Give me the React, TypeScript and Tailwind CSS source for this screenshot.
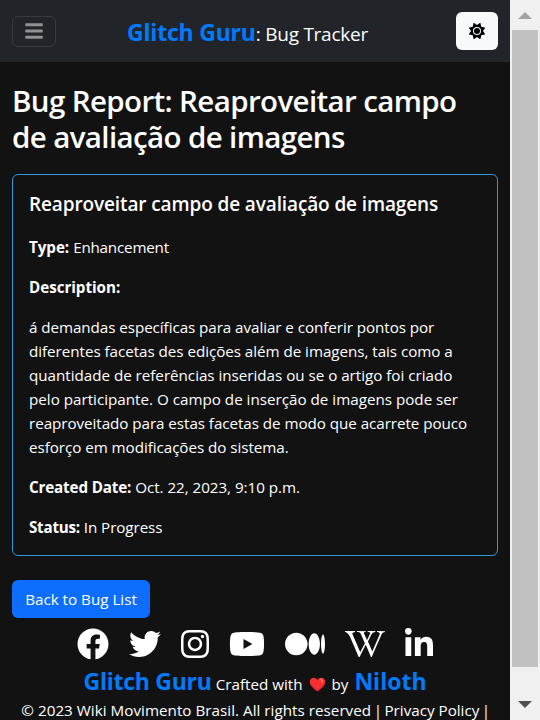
import type { ReactNode } from "react";
import { FaBars, FaFacebook, FaInstagram, FaLinkedinIn, FaTwitter, FaWikipediaW, FaYoutube } from "react-icons/fa";
import { FaMedium, FaSun } from "react-icons/fa6";

function Line({ className = "", children }: { className?: string; children: ReactNode }) {
  return <span className={`block whitespace-nowrap ${className}`}>{children}</span>;
}

function Heart() {
  return (
    <svg viewBox="0 0 18 16" className="h-[15px] w-[17px]" aria-label="love">
      <path d="M9 15.5C6 13 .8 9.500.8 5.200C.8 2.500 2.700.8 5 .8C6.800.8 8.300 1.800 9 3.300C9.700 1.800 11.200.8 13 .8C15.300.8 17.200 2.500 17.200 5.200C17.200 9.500 12 13 9 15.500Z" fill="#f8312f" />
      <path d="M12 2.500C13.800 2.500 14.800 4 14 5.500" fill="none" stroke="#ff7a72" strokeWidth="1.300" strokeLinecap="round" />
      <path d="M2.500 8C4 11 7 13 9 14.700C12 12.300 16 9.500 16.800 6" fill="none" stroke="#ca0b4a" strokeWidth=".7" />
    </svg>
  );
}

function Header() {
  return (
    <header className="flex h-[62px] shrink-0 items-center justify-between bg-[#212529] px-3">
      <button className="flex h-[31px] w-11 items-center justify-center rounded-md border border-[#373b3e] text-[#909294]">
        <FaBars className="h-5 w-5" />
      </button>
      <div className="mr-[17px] flex items-baseline pt-0.5 whitespace-nowrap">
        <span className="text-[23px] font-bold tracking-[-0.2px] text-[#007bff]">Glitch Guru</span>
        <span className="text-[19px] tracking-[-0.25px]">: Bug Tracker</span>
      </div>
      <button className="flex h-[38px] w-[42px] items-center justify-center rounded-md bg-[#f8f9fa] text-black">
        <FaSun className="h-4 w-4" />
      </button>
    </header>
  );
}

function Scrollbar() {
  return (
    <aside className="flex h-full w-[30px] flex-col items-center bg-[#f0f0f0]">
      <div className="flex h-[30px] items-center">
        <svg viewBox="0 0 14 7" className="h-[7px] w-[14px]"><path d="M0 7L7 0L14 7Z" fill="#a3a3a3" /></svg>
      </div>
      <div className="h-[637px] w-[26px] bg-[#c1c1c1]" />
      <div className="flex flex-1 items-center pt-[22px]">
        <svg viewBox="0 0 14 7" className="h-[7px] w-[14px]"><path d="M0 0L7 7L14 0Z" fill="#505050" /></svg>
      </div>
    </aside>
  );
}

export default function App() {
  return (
    <div className="flex h-[720px] w-[540px] overflow-hidden bg-[#121212] font-['Open_Sans','Noto_Sans',sans-serif] text-white">
      <div className="flex w-[510px] flex-col">
        <Header />
        <main className="shrink-0 px-3 pt-[21px]">
          <h1 className="text-[29.5px] leading-9 font-semibold tracking-[-0.62px]">
            <Line>Bug Report: Reaproveitar campo</Line>
            <Line>de avaliação de imagens</Line>
          </h1>
          <section className="mt-[19px] h-[382px] rounded-md border border-[#3498db] px-4 pt-[17px] text-[15.2px] leading-6 tracking-[-0.04px]">
            <h2 className="text-[19px] font-semibold tracking-[-0.12px]"><Line>Reaproveitar campo de avaliação de imagens</Line></h2>
            <p className="mt-[19px] flex gap-1"><b>Type:</b><span className="tracking-[-0.2px]">Enhancement</span></p>
            <p className="mt-4"><b>Description:</b></p>
            <p className="mt-4">
              <Line className="tracking-[-0.06px]">á demandas específicas para avaliar e conferir pontos por</Line>
              <Line>diferentes facetas des edições além de imagens, tais como a</Line>
              <Line className="tracking-[-0.02px]">quantidade de referências inseridas ou se o artigo foi criado</Line>
              <Line className="tracking-normal">pelo participante. O campo de inserção de imagens pode ser</Line>
              <Line className="tracking-[-0.05px]">reaproveitado para estas facetas de modo que acarrete pouco</Line>
              <Line className="tracking-[-0.05px]">esforço em modificações do sistema.</Line>
            </p>
            <p className="mt-4 flex gap-1"><b className="tracking-[-0.15px]">Created Date:</b><span>Oct. 22, 2023, 9:10 p.m.</span></p>
            <p className="mt-4 flex gap-1"><b className="tracking-[-0.25px]">Status:</b><span className="tracking-[-0.08px]">In Progress</span></p>
          </section>
          <button className="mt-6 flex h-[38px] w-[138px] items-center justify-center rounded-md bg-[#0d6efd] text-[15.2px] whitespace-nowrap">Back to Bug List</button>
        </main>
        <footer className="mt-[10px] flex shrink-0 flex-col items-center whitespace-nowrap">
          <div className="flex h-8 items-center gap-5">
            <FaFacebook className="h-8 w-8" />
            <FaTwitter className="h-8 w-8" />
            <FaInstagram className="h-8 w-7" />
            <FaYoutube className="h-8 w-9" />
            <FaMedium className="h-8 w-10" />
            <FaWikipediaW className="h-8 w-10" />
            <FaLinkedinIn className="h-8 w-7" />
          </div>
          <div className="mt-[3px] flex h-[35px] items-baseline text-[15.2px] leading-9">
            <span className="text-[23px] font-bold tracking-[-0.25px] text-[#007bff]">Glitch Guru</span>
            <span className="ml-1 tracking-normal">Crafted with</span>
            <span className="mx-1.5 self-center pt-[7px]"><Heart /></span>
            <span>by</span>
            <span className="ml-1.5 text-[23px] font-bold text-[#007bff]">Niloth</span>
          </div>
          <p className="flex gap-1 text-[15.2px] leading-6">
            <span className="tracking-[0.03px]">© 2023 Wiki Movimento Brasil. All rights reserved</span>
            <span className="-mx-[1.5px]">|</span>
            <span>Privacy Policy</span>
            <span className="-mx-[1.5px]">|</span>
          </p>
        </footer>
      </div>
      <Scrollbar />
    </div>
  );
}
